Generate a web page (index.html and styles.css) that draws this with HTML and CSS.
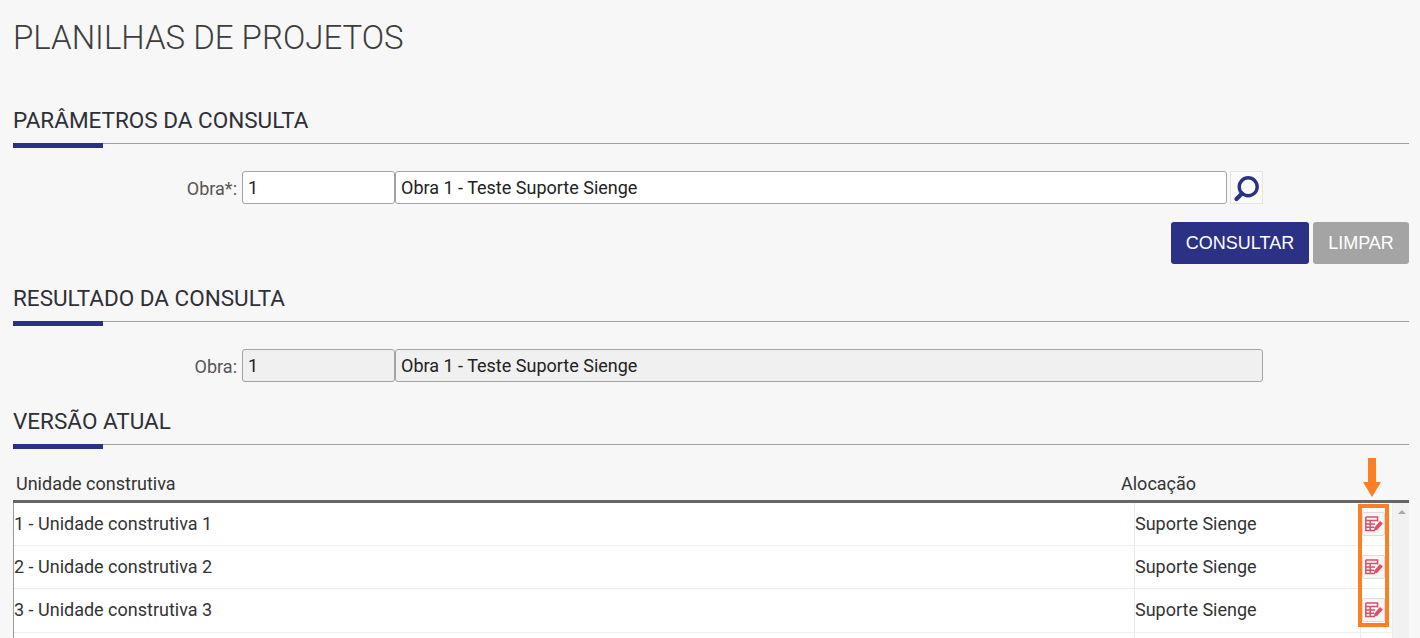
FILE: index.html
```html
<!DOCTYPE html>
<html lang="en">
<head>
    <meta charset="UTF-8">
    <meta name="viewport" content="width=device-width, initial-scale=1.0">
    <title>Planilhas de Projetos</title>
    <link rel="stylesheet" href="styles.css">
</head>
<body>
    <div class="page">
        <h1>PLANILHAS DE PROJETOS</h1>

        <h2 class="section-title">PARÂMETROS DA CONSULTA</h2>
        <div class="field-row">
            <label class="field-label">Obra*:</label>
            <input class="input-code" type="text" value="1">
            <input class="input-name" type="text" value="Obra 1 - Teste Suporte Sienge">
            <button class="search-btn" type="button" aria-label="Pesquisar">
                <svg width="28" height="28" viewBox="0 0 28 28">
                    <circle cx="15.2" cy="12.8" r="9" fill="none" stroke="#2b3184" stroke-width="3.4"/>
                    <path d="M9 19.5 L3.5 25" stroke="#2b3184" stroke-width="4.2" stroke-linecap="round"/>
                </svg>
            </button>
        </div>
        <div class="actions">
            <button class="btn btn-primary" type="button">CONSULTAR</button>
            <button class="btn btn-disabled" type="button">LIMPAR</button>
        </div>

        <h2 class="section-title result-title">RESULTADO DA CONSULTA</h2>
        <div class="field-row">
            <label class="field-label">Obra:</label>
            <input class="input-code readonly" type="text" value="1" readonly>
            <input class="input-name input-long readonly" type="text" value="Obra 1 - Teste Suporte Sienge" readonly>
        </div>

        <h2 class="section-title version-title">VERSÃO ATUAL</h2>
        <div class="table-head">
            <span class="col-unit">Unidade construtiva</span>
            <span class="col-alloc">Alocação</span>
        </div>
        <div class="table-wrap">
            <div class="table-body">
                <div class="table-row">
                    <span class="cell-unit">1 - Unidade construtiva 1</span>
                    <span class="cell-alloc">Suporte Sienge</span>
                    <span class="cell-action">
                        <button class="edit-btn" type="button" aria-label="Editar">
                            <svg width="18" height="16" viewBox="0 0 18 16"><use href="#edit-icon"/></svg>
                        </button>
                    </span>
                </div>
                <div class="table-row">
                    <span class="cell-unit">2 - Unidade construtiva 2</span>
                    <span class="cell-alloc">Suporte Sienge</span>
                    <span class="cell-action">
                        <button class="edit-btn" type="button" aria-label="Editar">
                            <svg width="18" height="16" viewBox="0 0 18 16"><use href="#edit-icon"/></svg>
                        </button>
                    </span>
                </div>
                <div class="table-row row-tall">
                    <span class="cell-unit">3 - Unidade construtiva 3</span>
                    <span class="cell-alloc">Suporte Sienge</span>
                    <span class="cell-action">
                        <button class="edit-btn" type="button" aria-label="Editar">
                            <svg width="18" height="16" viewBox="0 0 18 16"><use href="#edit-icon"/></svg>
                        </button>
                    </span>
                </div>
                <div class="table-row row-cut">
                    <span class="cell-unit"></span>
                    <span class="cell-alloc"></span>
                    <span class="cell-action"></span>
                </div>
            </div>
            <div class="scrollbar">
                <span class="scroll-up"></span>
            </div>

            <!-- Orange callout drawn over the table -->
            <div class="callout-box"></div>
            <svg class="callout-arrow" width="18" height="39" viewBox="0 0 18 39">
                <path d="M5 0 H13 V24 H18 L9 39 L0 24 H5 Z" fill="#fd7e23"/>
            </svg>
        </div>
    </div>

    <svg class="icon-defs" width="0" height="0">
        <symbol id="edit-icon" viewBox="0 0 18 16">
            <path d="M0.8 1 H12.6 V5.5 M0.8 1 V14.6 H10 M0.8 4.6 H12.6 M0.8 8 H10 M0.8 11.3 H9 M5.2 4.6 V14.6" fill="none" stroke="#dc4f69" stroke-width="1.5"/>
            <path d="M8.8 14.8 L9.6 11.2 L15 5 L17.8 7.4 L12.3 13.8 Z" fill="#dc4f69"/>
        </symbol>
    </svg>
</body>
</html>
```

FILE: styles.css
```css
html, body {
    height: 100%;
    margin: 0;
    overflow: hidden;
}
body {
    font-family: Roboto, 'Liberation Sans', sans-serif;
    background-color: #f7f7f7;
    color: #333;
}
.page {
    padding: 19px 11px 0 13px;
}
h1 {
    margin: 0;
    font-size: 33px;
    font-weight: 300;
    line-height: 38px;
    color: #3d3d3d;
}
.section-title {
    position: relative;
    margin: 51px 0 0 0;
    padding-bottom: 11px;
    font-size: 22.5px;
    font-weight: 400;
    line-height: 24px;
    color: #2f2f38;
    border-bottom: 1px solid #a0a0a0;
}
.section-title::after {
    content: '';
    position: absolute;
    left: 0;
    top: 35px;
    width: 90px;
    height: 5px;
    background-color: #2b3184;
}
.result-title {
    margin-top: 22px;
}
.version-title {
    margin-top: 27px;
}
.field-row {
    display: flex;
    margin-top: 27px;
    height: 33px;
}
.field-label {
    width: 229px;
    padding-right: 5px;
    text-align: right;
    font-size: 18px;
    line-height: 35px;
    color: #555;
    box-sizing: border-box;
}
.input-code, .input-name {
    box-sizing: border-box;
    height: 33px;
    padding: 0 5px;
    border: 1px solid #a3a3a3;
    border-radius: 3px;
    background-color: #fff;
    font-family: Roboto, sans-serif;
    font-size: 18px;
    color: #222;
    outline: none;
}
.input-code {
    width: 153px;
}
.input-name {
    width: 832px;
}
.input-long {
    width: 868px;
}
.readonly {
    background-color: #f0f0f0;
}
.search-btn {
    display: flex;
    align-items: center;
    justify-content: center;
    width: 33px;
    height: 33px;
    margin-left: 3px;
    padding: 0;
    border: 1px solid #e4e4e4;
    background-color: #fafafa;
    cursor: pointer;
}
.actions {
    display: flex;
    justify-content: flex-end;
    gap: 4px;
    margin-top: 18px;
}
.btn {
    height: 42px;
    padding: 0;
    border: none;
    border-radius: 3px;
    color: #fff;
    font-family: 'Liberation Sans', sans-serif;
    font-size: 18px;
    cursor: pointer;
}
.btn-primary {
    width: 138px;
    background-color: #2b3184;
}
.btn-disabled {
    width: 96px;
    background-color: #a4a4a4;
}
.table-head {
    display: flex;
    height: 55px;
    padding-top: 27px;
    box-sizing: border-box;
    font-size: 18px;
    line-height: 24px;
    color: #333;
}
.col-unit {
    width: 1108px;
    padding-left: 3px;
    box-sizing: border-box;
}
.table-wrap {
    position: relative;
    display: flex;
    border-top: 3px solid #666;
}
.table-body {
    flex: 1;
    background-color: #fff;
    border-left: 1px solid #999;
}
.table-row {
    display: flex;
    height: 43px;
    box-sizing: border-box;
    border-bottom: 1px solid #eee;
    font-size: 18px;
    line-height: 42px;
    color: #333;
}
.row-tall {
    height: 44px;
}
.row-cut {
    height: 5px;
    border-bottom: none;
}
.cell-unit {
    width: 1120px;
}
.cell-alloc {
    width: 226px;
    border-left: 1px solid #eaeaea;
    box-sizing: border-box;
}
.cell-action {
    display: flex;
    align-items: flex-start;
    width: 30px;
    padding: 9px 0 0 1px;
    box-sizing: content-box;
    border-left: 1px solid #eaeaea;
    border-right: 1px solid #eaeaea;
}
.edit-btn {
    display: flex;
    align-items: center;
    justify-content: center;
    width: 23px;
    height: 24px;
    padding: 0;
    border: 1px solid #ddd;
    border-radius: 2px;
    background-color: #f6f6f6;
    cursor: pointer;
}
.scrollbar {
    position: relative;
    width: 18px;
    background-color: #f1f1f1;
}
.scroll-up {
    position: absolute;
    top: 7px;
    left: 5px;
    border-left: 4px solid transparent;
    border-right: 4px solid transparent;
    border-bottom: 4px solid #a8a8a8;
}
.callout-box {
    position: absolute;
    left: 1345px;
    top: 1px;
    width: 31px;
    height: 123px;
    box-sizing: border-box;
    border: 4px solid #fd7e23;
}
.callout-arrow {
    position: absolute;
    left: 1350px;
    top: -45px;
}
.icon-defs {
    position: absolute;
}
```
